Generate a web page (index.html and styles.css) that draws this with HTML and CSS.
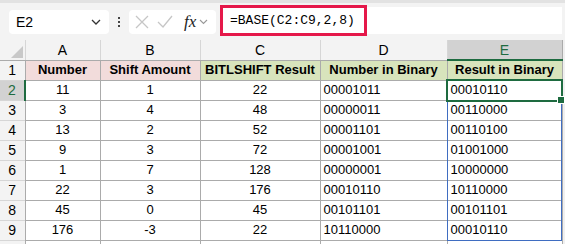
FILE: index.html
```html
<!DOCTYPE html>
<html lang="en">

<head>
    <meta charset="UTF-8">
    <meta name="viewport" content="width=device-width, initial-scale=1.0">
    <title>BASE</title>
    <link rel="stylesheet" href="styles.css">
</head>

<body>
    <div class="toolbar">
        <div class="name-box">
            <span>E2</span>
            <svg width="10" height="6" viewBox="0 0 10 6"><path d="M1 1 L5 5 L9 1" fill="none" stroke="#333" stroke-width="1.3"/></svg>
        </div>
        <div class="dots"><span></span><span></span><span></span></div>
        <div class="fx-box">
            <svg width="14" height="14" viewBox="0 0 14 14"><path d="M1 1 L13 13 M13 1 L1 13" stroke="#c6c6c6" stroke-width="1.3"/></svg>
            <svg width="16" height="14" viewBox="0 0 16 14"><path d="M1 7 L6 12 L15 1" fill="none" stroke="#c6c6c6" stroke-width="1.3"/></svg>
            <span class="fx">fx</span>
            <svg width="9" height="6" viewBox="0 0 9 6"><path d="M1 1 L4.5 4.5 L8 1" fill="none" stroke="#999" stroke-width="1.1"/></svg>
        </div>
        <div class="formula">
            <div class="formula-text">=BASE(C2:C9,2,8)</div>
        </div>
    </div>

    <div class="sheet">
        <table class="grid">
            <colgroup>
                <col style="width: 25px">
                <col style="width: 75px">
                <col style="width: 100px">
                <col style="width: 120px">
                <col style="width: 127px">
                <col style="width: 115px">
                <col>
            </colgroup>
            <tr class="col-heads">
                <th class="corner"><svg width="12" height="12" viewBox="0 0 12 12"><path d="M12 0 L12 12 L0 12 Z" fill="#c8c8c8"/></svg></th>
                <th>A</th><th>B</th><th>C</th><th>D</th><th class="active">E</th><th class="edge"></th>
            </tr>
            <tr>
                <th class="row-head">1</th>
                <td class="head pink">Number</td>
                <td class="head pink">Shift Amount</td>
                <td class="head green">BITLSHIFT Result</td>
                <td class="head green">Number in Binary</td>
                <td class="head green">Result in Binary</td>
                <td class="edge"></td>
            </tr>
            <tr>
                <th class="row-head active">2</th>
                <td>11</td><td>1</td><td>22</td><td class="bin">00001011</td><td class="bin">00010110</td><td class="edge"></td>
            </tr>
            <tr>
                <th class="row-head">3</th>
                <td>3</td><td>4</td><td>48</td><td class="bin">00000011</td><td class="bin">00110000</td><td class="edge"></td>
            </tr>
            <tr>
                <th class="row-head">4</th>
                <td>13</td><td>2</td><td>52</td><td class="bin">00001101</td><td class="bin">00110100</td><td class="edge"></td>
            </tr>
            <tr>
                <th class="row-head">5</th>
                <td>9</td><td>3</td><td>72</td><td class="bin">00001001</td><td class="bin">01001000</td><td class="edge"></td>
            </tr>
            <tr>
                <th class="row-head">6</th>
                <td>1</td><td>7</td><td>128</td><td class="bin">00000001</td><td class="bin">10000000</td><td class="edge"></td>
            </tr>
            <tr>
                <th class="row-head">7</th>
                <td>22</td><td>3</td><td>176</td><td class="bin">00010110</td><td class="bin">10110000</td><td class="edge"></td>
            </tr>
            <tr>
                <th class="row-head">8</th>
                <td>45</td><td>0</td><td>45</td><td class="bin">00101101</td><td class="bin">00101101</td><td class="edge"></td>
            </tr>
            <tr>
                <th class="row-head">9</th>
                <td>176</td><td>-3</td><td>22</td><td class="bin">10110000</td><td class="bin">00010110</td><td class="edge"></td>
            </tr>
            <tr class="tail">
                <th class="row-head"></th>
                <td></td><td></td><td></td><td></td><td></td><td class="edge"></td>
            </tr>
        </table>
        <div class="range"></div>
        <div class="selection"><span class="handle"></span></div>
    </div>
</body>

</html>
```

FILE: styles.css
```css
body {
    margin: 0;
    background-color: #f3f3f3;
    font-family: "Liberation Sans", Arial, sans-serif;
    color: #000;
    overflow: hidden;
}

.toolbar {
    display: flex;
    align-items: center;
    height: 40px;
    padding-left: 9px;
    border-top: 3px solid #e2e2e2;
    box-sizing: border-box;
    background-color: #f3f3f3;
}

.name-box {
    display: flex;
    align-items: center;
    justify-content: space-between;
    width: 100px;
    height: 24px;
    padding: 0 8px 0 7px;
    box-sizing: border-box;
    background: #fff;
    border-radius: 4px;
    font-size: 14px;
}

.dots {
    display: flex;
    flex-direction: column;
    gap: 2px;
    margin: 0 9px 0 9px;
}

.dots span {
    width: 2px;
    height: 2px;
    background: #444;
}

.fx-box {
    display: flex;
    align-items: center;
    width: 87px;
    height: 24px;
    padding-left: 6px;
    box-sizing: border-box;
    gap: 8px;
    background: #fff;
    border-radius: 4px;
}

.fx {
    font-family: "Liberation Serif", serif;
    font-style: italic;
    font-size: 17px;
    margin-left: 3px;
    margin-right: -5px;
    color: #222;
}

.formula {
    flex: 1;
    height: 27px;
    margin-left: 4px;
    margin-right: 3px;
    margin-top: -2px;
    background: #fff;
    display: flex;
    align-items: stretch;
}

.formula-text {
    width: 147px;
    border: 3px solid #e5184a;
    box-sizing: border-box;
    height: 31px;
    margin-top: -2px;
    padding-left: 7px;
    font-family: "Liberation Mono", monospace;
    font-size: 13px;
    line-height: 25px;
}

.sheet {
    position: relative;
}

.grid {
    border-collapse: collapse;
    table-layout: fixed;
    width: 565px;
    font-size: 13px;
}

.grid th,
.grid td {
    height: 20px;
    padding: 0 2px;
    box-sizing: border-box;
    white-space: nowrap;
    overflow: hidden;
    line-height: 18px;
}

.grid td {
    border: 1px solid #ababab;
    background: #fff;
    text-align: center;
}

.col-heads th {
    height: 20px;
    background: #f3f3f3;
    font-weight: normal;
    font-size: 14px;
    border-left: 1px solid #d6d6d6;
    border-bottom: 1px solid #ababab;
    text-align: center;
}

.col-heads th.corner {
    border-left: none;
    text-align: right;
    vertical-align: bottom;
    padding: 0 2px 2px 0;
}

.corner svg {
    display: block;
    margin-left: auto;
}

.col-heads th.active {
    background: #d2d2d2;
    color: #1e6b40;
    border-bottom: 2px solid #1e6b40;
}

.row-head {
    background: #f3f3f3;
    font-weight: normal;
    font-size: 14px;
    text-align: center;
    border-top: 1px solid #d6d6d6;
    border-right: 1px solid #ababab;
}

.row-head.active {
    background: #d2d2d2;
    color: #1e6b40;
    border-right: 2px solid #1e6b40;
}

.grid td.head {
    font-weight: bold;
}

.grid td.pink {
    background: #f2dcdb;
}

.grid td.green {
    background: #d8e4bc;
}

.grid td.bin {
    text-align: left;
    padding-left: 3px;
}

.grid .edge {
    background: #f0f0f0;
    border: none;
    border-left: 1px solid #ababab;
}

.col-heads th.edge {
    border-bottom: none;
}

.tail th,
.tail td {
    height: 10px;
}

.range {
    position: absolute;
    left: 447px;
    top: 40px;
    width: 115px;
    height: 161px;
    border: 1px solid #3f6dc1;
    box-sizing: border-box;
}

.selection {
    position: absolute;
    left: 446px;
    top: 39px;
    width: 117px;
    height: 23px;
    border: 2px solid #1e6b40;
    box-sizing: border-box;
}

.handle {
    position: absolute;
    right: -4px;
    bottom: -4px;
    width: 6px;
    height: 6px;
    background: #1e6b40;
    border: 1px solid #fff;
}
```
